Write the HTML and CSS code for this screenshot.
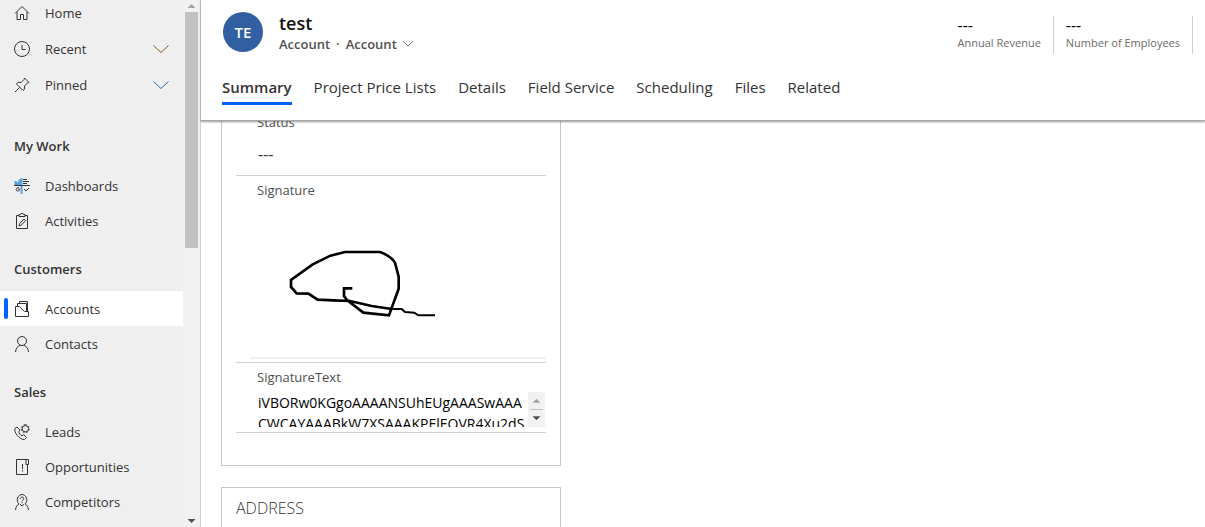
FILE: index.html
```
<!DOCTYPE html>
<html lang="en">
<head>
    <meta charset="UTF-8">
    <meta name="viewport" content="width=device-width, initial-scale=1.0">
    <title>Account: test</title>
    <link rel="stylesheet" href="styles.css">
</head>
<body>
    <div class="app">
        <aside class="sidebar">
            <nav class="nav">
                <ul class="nav-list nav-top">
                    <li><a class="nav-item" href="#">
                        <svg class="icon" viewBox="0 0 16 16"><path d="M1 8.5 8 1.5l7 7M3 7v7.5h3.5V9.500h3v5H13V7"/></svg>
                        <span>Home</span></a></li>
                    <li><button class="nav-item" type="button">
                        <svg class="icon" viewBox="0 0 16 16"><circle cx="8" cy="8" r="7.500"/><path d="M8 4v4.500h3.500"/></svg>
                        <span>Recent</span>
                        <svg class="chevron warm" viewBox="0 0 16 8"><path d="M.5.5 8 7.500 15.500.5"/></svg></button></li>
                    <li><button class="nav-item" type="button">
                        <svg class="icon" viewBox="0 0 16 16"><path d="M10.500 1 15 5.500l-1.500.5-3 3 .2 3L9 13.500 2.500 7l1.500-1.700 3 .2 3-3zM5.700 10.300 1 15"/></svg>
                        <span>Pinned</span>
                        <svg class="chevron cool" viewBox="0 0 16 8"><path d="M.5.5 8 7.500 15.500.5"/></svg></button></li>
                </ul>

                <h2 class="nav-title">My Work</h2>
                <ul class="nav-list">
                    <li><a class="nav-item" href="#">
                        <svg class="icon" viewBox="0 0 16 16"><path class="blue" d="M1.500 3v4M3.500 4v3M5.500 1.500V7M7.500 0v16"/><path d="M0 7.500h16M9 1.500h4M9 3.500h6M9 5.500h4"/><path d="M5 9.500c-3 0-4 3-1.500 3.500 1.500.2 2.500-1 2-2H4M10 11l2 2 3-3"/></svg>
                        <span>Dashboards</span></a></li>
                    <li><a class="nav-item" href="#">
                        <svg class="icon" viewBox="0 0 16 16"><path d="M5 2.500H2.500v13h11v-13H11M5 1.500h1.500l.5-1h2l.5 1H11v2H5zM5 13l.7-2.500L10 6l1.700 1.600-4.400 4.600z"/></svg>
                        <span>Activities</span></a></li>
                </ul>

                <h2 class="nav-title">Customers</h2>
                <ul class="nav-list">
                    <li><a class="nav-item active" href="#">
                        <svg class="icon" viewBox="0 0 16 16"><path d="M1.500 5.500v10h13v-5h-4l-5-5zM3.500 5V2.500h9v8M5.500 2V.500h8v10"/></svg>
                        <span>Accounts</span></a></li>
                    <li><a class="nav-item" href="#">
                        <svg class="icon" viewBox="0 0 16 16"><circle cx="8" cy="5" r="4.500"/><path d="M1.500 16c.3-3.500 2-6 5-6.700M14.500 16c-.3-3.500-2-6-5-6.700"/></svg>
                        <span>Contacts</span></a></li>
                </ul>

                <h2 class="nav-title">Sales</h2>
                <ul class="nav-list">
                    <li><a class="nav-item" href="#">
                        <svg class="icon" viewBox="0 0 16 16"><path d="M3 3 1 4.500C-.5 8 5.500 16 10.500 15.500l2-2-2.700-2.800-1.800 1C6.500 11.500 4.500 9 5 7.500l1-1.500z"/><circle cx="11.300" cy="4.700" r="3.200"/><path stroke-dasharray="1.500 1.780" d="M11.300.700a4 4 0 1 1 0 8 4 4 0 1 1 0-8"/></svg>
                        <span>Leads</span></a></li>
                    <li><a class="nav-item" href="#">
                        <svg class="icon" viewBox="0 0 16 16"><path d="M12 .500H2.500v15h11V5.500M12 .500h2.500v5H12zM8.500 5v5M8.500 11.200v1.300"/></svg>
                        <span>Opportunities</span></a></li>
                    <li><a class="nav-item" href="#">
                        <svg class="icon" viewBox="0 0 16 16"><path d="M5 10C1.500 7 3.500.500 8 .500S14.500 7 11 10M5 10c-2 1-3.200 3-3.500 6M11 10c2 1 3.200 3 3.500 6M6 10.200 8 12l2-1.800M6.300 4.800c0-2.300 3.500-2.300 3.500 0C9.800 6 8 6 8 7.300M8 8.300v1"/></svg>
                        <span>Competitors</span></a></li>
                </ul>
            </nav>
            <div class="scrollbar" aria-hidden="true">
                <span class="arrow up"></span>
                <div class="track"><div class="thumb"></div></div>
                <span class="arrow down"></span>
            </div>
        </aside>

        <main class="main">
            <header class="header">
                <div class="record">
                    <div class="avatar">TE</div>
                    <div class="record-info">
                        <h1 class="record-name">test</h1>
                        <div class="record-type">
                            <span>Account</span>
                            <span>·</span>
                            <button class="form-switch" type="button">Account
                                <svg class="small-chevron" viewBox="0 0 10 6"><path d="M.5.5 5 5 9.500.5"/></svg>
                            </button>
                        </div>
                    </div>
                    <dl class="metrics">
                        <div class="metric">
                            <dt>Annual Revenue</dt>
                            <dd>---</dd>
                        </div>
                        <div class="metric">
                            <dt>Number of Employees</dt>
                            <dd>---</dd>
                        </div>
                    </dl>
                </div>
                <nav class="tabs">
                    <a class="tab selected" href="#">Summary</a>
                    <a class="tab" href="#">Project Price Lists</a>
                    <a class="tab" href="#">Details</a>
                    <a class="tab" href="#">Field Service</a>
                    <a class="tab" href="#">Scheduling</a>
                    <a class="tab" href="#">Files</a>
                    <a class="tab" href="#">Related</a>
                </nav>
            </header>

            <div class="form">
                <section class="card card-scrolled">
                    <div class="field">
                        <div class="label">Status</div>
                        <div class="value">---</div>
                    </div>
                    <div class="field">
                        <div class="label">Signature</div>
                        <div class="signature">
                            <svg viewBox="0 0 888 456" role="img" aria-label="Signature">
                                <path d="M307 250h-25v23l9 12 49 38 77 8 13-36 16-44v-36l-11-42q-12-20-45-32H285l-44 11-54 27-64 46v21l17 19 35 1 28 18 47 2 50 2 65 15 60 9"/>
                                <path class="tail" d="M425 312h30l10 9 28 2 12 8h50"/>
                            </svg>
                        </div>
                    </div>
                    <div class="field">
                        <label class="label" for="signature-text">SignatureText</label>
                        <div class="text-box">
                            <textarea id="signature-text" class="textarea" spellcheck="false">iVBORw0KGgoAAAANSUhEUgAAASwAAACWCAYAAABkW7XSAAAKPElEQVR4Xu2dS</textarea>
                            <div class="spinner" aria-hidden="true">
                                <span class="arrow up"></span>
                                <span class="arrow down"></span>
                            </div>
                        </div>
                    </div>
                </section>
                <section class="card">
                    <h2 class="card-title">ADDRESS</h2>
                </section>
            </div>
        </main>
    </div>
</body>
</html>
```
FILE: styles.css
```
* {
    box-sizing: border-box;
}

body {
    margin: 0;
    font-family: "Open Sans", "Noto Sans", sans-serif;
    font-size: 13px;
    color: #333;
    background-color: #fff;
}

h1, h2, ul, dl, dd {
    margin: 0;
    padding: 0;
}

button {
    font: inherit;
    color: inherit;
    background: none;
    border: none;
    padding: 0;
    cursor: pointer;
}

a {
    color: inherit;
    text-decoration: none;
}

svg {
    fill: none;
    stroke: #333;
    flex-shrink: 0;
}

.app {
    display: flex;
    height: 100vh;
    overflow: hidden;
}

/* Sidebar */
.sidebar {
    display: flex;
    width: 201px;
    flex-shrink: 0;
    background-color: #efefef;
    border-right: 1px solid #d0d0d0;
}

.nav {
    flex: 1;
    overflow: hidden;
}

.nav-list {
    list-style: none;
}

.nav-top {
    display: flex;
    flex-direction: column;
    gap: 1px;
    margin-top: -5px;
    margin-bottom: 13px;
}

.nav-title {
    padding: 10px 14px 0;
    font-size: 13px;
    font-weight: 600;
    line-height: 43px;
}

.nav-item {
    display: flex;
    align-items: center;
    gap: 15px;
    width: 100%;
    height: 35px;
    padding: 0 14px;
    position: relative;
}

.nav-item.active {
    background-color: #fff;
}

.nav-item.active::before {
    content: "";
    position: absolute;
    left: 4px;
    top: 7px;
    width: 4px;
    height: 21px;
    border-radius: 2px;
    background-color: #0062ff;
}

.icon {
    width: 16px;
    height: 16px;
}

.icon .blue {
    stroke: #2f8fe0;
    stroke-width: 2;
    stroke-opacity: 0.8;
}

.chevron {
    width: 16px;
    height: 8px;
    margin-left: auto;
}

.chevron.warm {
    stroke: #8a5a20;
}

.chevron.cool {
    stroke: #2a6ca8;
}

.scrollbar {
    display: flex;
    flex-direction: column;
    align-items: center;
    width: 17px;
    background-color: #f1f1f1;
}

.track {
    flex: 1;
    width: 13px;
}

.thumb {
    height: 47%;
    background-color: #c1c1c1;
}

.arrow {
    width: 8px;
    height: 4px;
    margin: 4px 0;
}

.arrow.up {
    background-color: #a3a3a3;
    clip-path: polygon(50% 0, 100% 100%, 0 100%);
}

.arrow.down {
    background-color: #505050;
    clip-path: polygon(0 0, 100% 0, 50% 100%);
}

/* Header */
.main {
    display: flex;
    flex-direction: column;
    flex: 1;
    min-width: 0;
}

.header {
    position: relative;
    z-index: 1;
    padding: 12px 12px 15px 21px;
    background-color: #fff;
    border-bottom: 1px solid #a8a8a8;
    box-shadow: 0 1px 2px rgba(0, 0, 0, 0.4);
}

.record {
    display: flex;
    gap: 16px;
    padding-left: 1px;
}

.avatar {
    width: 40px;
    height: 40px;
    border-radius: 50%;
    background-color: #315fa2;
    color: #fff;
    font-size: 15px;
    font-weight: 600;
    line-height: 40px;
    text-align: center;
}

.record-name {
    font-size: 18px;
    font-weight: 600;
    line-height: 22px;
    color: #111;
}

.record-type {
    display: flex;
    gap: 6px;
    font-weight: 600;
    line-height: 20px;
    color: #505050;
}

.form-switch {
    display: flex;
    align-items: center;
    gap: 6px;
}

.small-chevron {
    width: 10px;
    height: 6px;
    stroke: #777;
}

.metrics {
    display: flex;
    gap: 12px;
    margin-left: auto;
    padding-top: 4px;
}

.metric {
    display: flex;
    flex-direction: column-reverse;
    justify-content: flex-end;
    height: 38px;
    padding-right: 12px;
    border-right: 1px solid #d0d0d0;
}

.metric dt {
    font-size: 11px;
    line-height: 18px;
    color: #6b6b6b;
}

.metric dd {
    font-size: 16px;
    line-height: 18px;
    color: #000;
}

.tabs {
    display: flex;
    gap: 22px;
    margin-top: 21px;
    font-size: 15px;
}

.tab {
    height: 30px;
    line-height: 24px;
}

.tab.selected {
    font-weight: 600;
    border-bottom: 3px solid #0062ff;
}

/* Form */
.form {
    flex: 1;
    display: flex;
    flex-direction: column;
    gap: 21px;
    padding: 0 20px;
    overflow: hidden;
}

.card {
    flex-shrink: 0;
    width: 340px;
    padding: 8px 14px;
    border: 1px solid #c8c8c8;
}

.card-scrolled {
    margin-top: -22px;
    padding-bottom: 32px;
}

.card-title {
    font-size: 16px;
    font-weight: 300;
    line-height: 24px;
}

.field {
    border-bottom: 1px solid #d0d0d0;
}

.label {
    display: block;
    padding-left: 21px;
    line-height: 29px;
    color: #505050;
}

.value {
    padding: 0 22px 4px;
    font-size: 16px;
    line-height: 34px;
}

.signature {
    margin-left: 14px;
    margin-bottom: 3px;
    border-bottom: 2px solid #f0f0f0;
}

.signature svg {
    display: block;
    width: 100%;
    stroke: #000;
    stroke-width: 8;
}

.signature .tail {
    stroke-width: 6;
}

.text-box {
    display: flex;
    justify-content: space-between;
    padding: 0 1px 5px 22px;
}

.textarea {
    width: 268px;
    height: 35px;
    padding: 0;
    border: none;
    outline: none;
    resize: none;
    overflow: hidden;
    font: inherit;
    font-size: 14px;
    line-height: 21px;
    color: #000;
    word-break: break-all;
}

.spinner {
    display: flex;
    flex-direction: column;
    align-items: center;
    justify-content: space-around;
    width: 17px;
    background: linear-gradient(#c1c1c1, #c1c1c1) center / 13px 1px no-repeat #f1f1f1;
}
```
